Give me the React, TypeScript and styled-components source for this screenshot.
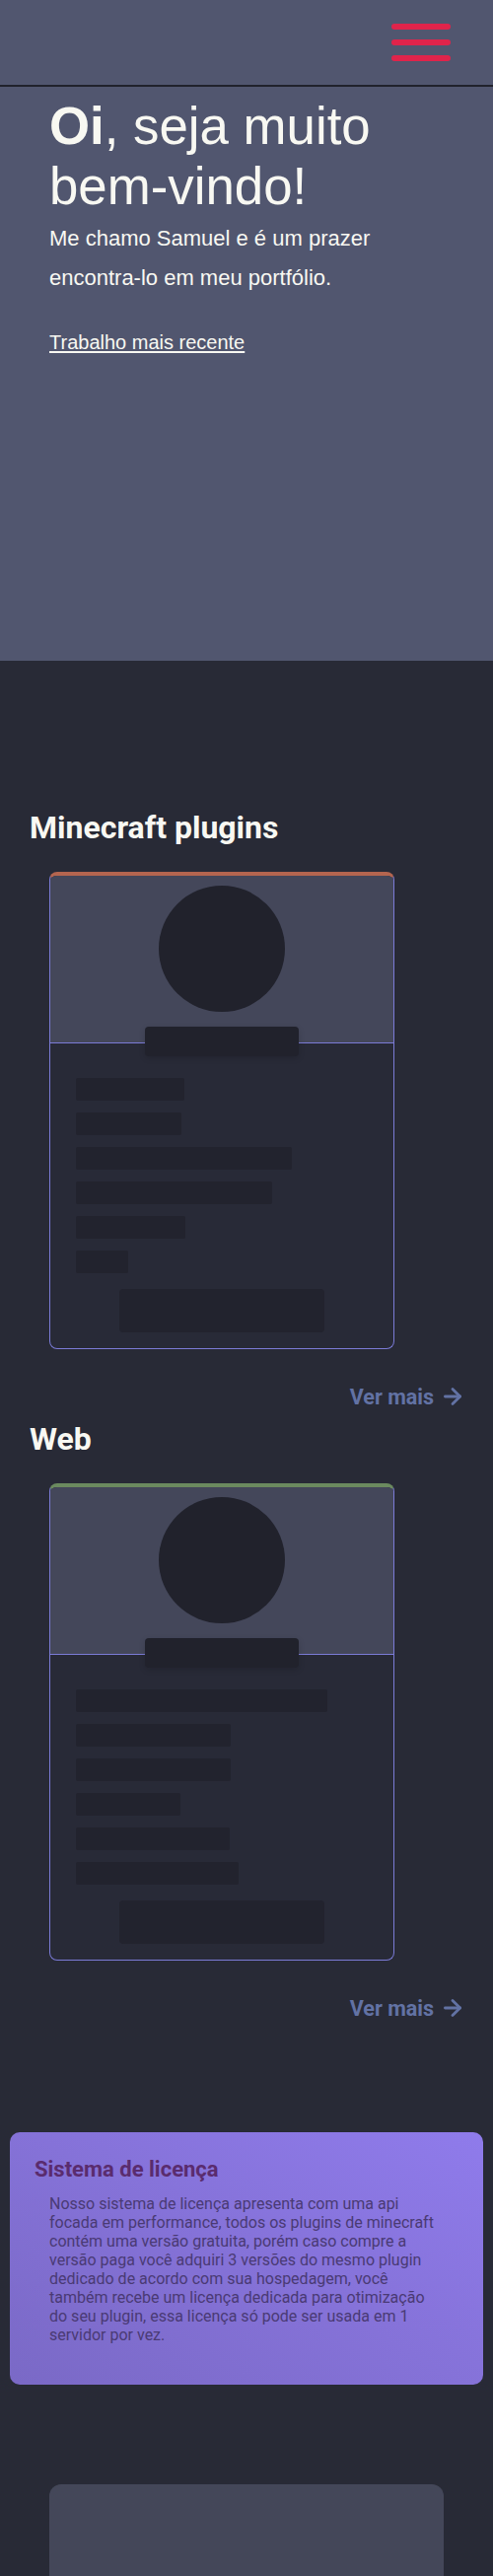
import React from 'react';
import styled, { createGlobalStyle } from 'styled-components';
import { ArrowRight } from 'lucide-react';

const GlobalStyle = createGlobalStyle`
  * { box-sizing: border-box; }
  html, body { margin: 0; padding: 0; background: #282a36; }
  body { font-family: "Liberation Sans", Arial, sans-serif; color: #f8f8f2; }
`;

const Page = styled.div`
  background: #282a36;
  min-height: 2612px;
  overflow: hidden;
`;

const Hero = styled.section`
  background: #51566f;
  height: 670px;
  display: flex;
  flex-direction: column;
`;

const Header = styled.header`
  height: 88px;
  border-bottom: 2px solid #21222c;
  display: flex;
  align-items: center;
  justify-content: flex-end;
  padding-right: 43px;
`;

const MenuButton = styled.button`
  background: none;
  border: 0;
  padding: 0;
  display: flex;
  flex-direction: column;
  gap: 10px;
  cursor: pointer;
`;

const MenuBar = styled.span`
  display: block;
  width: 60px;
  height: 6px;
  border-radius: 3px;
  background: #e0244b;
`;

const HeroContent = styled.div`
  padding: 9px 0 0 50px;
  width: 450px;
  display: flex;
  flex-direction: column;
  align-items: flex-start;
`;

const HeroTitle = styled.h1`
  margin: 0;
  font-size: 52.8px;
  font-weight: 400;
  line-height: 61px;
  color: #f8f8f2;

  strong {
    font-weight: 700;
  }
`;

const HeroText = styled.p`
  margin: 3px 0 0;
  font-size: 22px;
  line-height: 40px;
  color: #f8f8f2;
`;

const HeroLink = styled.a`
  margin-top: 34px;
  font-size: 20px;
  line-height: normal;
  color: #f8f8f2;
  text-decoration: underline;
  text-underline-offset: 2px;
`;

const Projects = styled.section`
  padding-top: 150px;
  display: flex;
  flex-direction: column;
`;

const SectionTitle = styled.h2<{ $gap: number }>`
  margin: ${(p) => p.$gap}px 0 0 30px;
  font-family: Roboto, "Liberation Sans", sans-serif;
  font-weight: 700;
  font-size: 32px;
  line-height: normal;
  color: #f8f8f2;
`;

const Card = styled.article<{ $accent: string }>`
  margin: 26px 0 0 50px;
  width: 350px;
  background: #282a37;
  border: 1px solid #7b7bd6;
  border-top: 4px solid ${(p) => p.$accent};
  border-radius: 8px;
  overflow: hidden;
  display: flex;
  flex-direction: column;
`;

const CardTop = styled.div`
  height: 170px;
  padding-top: 10px;
  background: #44475a;
  border-bottom: 1px solid #7b7bd6;
  display: flex;
  justify-content: center;
`;

const Avatar = styled.div`
  width: 128px;
  height: 128px;
  border-radius: 50%;
  background: #21222c;
`;

const NameBlock = styled.div`
  position: relative;
  width: 156px;
  height: 30px;
  margin: -17px auto 0;
  border-radius: 4px;
  background: #21222c;
  box-shadow: 0 2px 6px rgba(0, 0, 0, 0.15);
`;

const Lines = styled.div`
  padding: 22px 26px 0;
  display: flex;
  flex-direction: column;
  gap: 12px;
`;

const Line = styled.div<{ $w: number }>`
  width: ${(p) => p.$w}px;
  height: 23px;
  border-radius: 2px;
  background: #22232e;
`;

const CardButton = styled.div`
  width: 208px;
  height: 44px;
  margin: 16px auto 16px;
  border-radius: 4px;
  background: #22232e;
`;

const MoreRow = styled.div`
  margin-top: 35px;
  padding-right: 28px;
  display: flex;
  justify-content: flex-end;
`;

const MoreLink = styled.a`
  display: flex;
  align-items: center;
  gap: 6px;
  font-family: Roboto, "Liberation Sans", sans-serif;
  font-weight: 700;
  font-size: 21.5px;
  line-height: normal;
  color: #6272a4;
  text-decoration: none;
`;

const LicenseBox = styled.section`
  margin: 113px 10px 0;
  padding: 25px 25px 41px;
  border-radius: 10px;
  background: linear-gradient(30deg, #7a69c6 0%, #8572d8 50%, #8f7beb 100%);
  font-family: Roboto, "Liberation Sans", sans-serif;
`;

const LicenseTitle = styled.h3`
  margin: 0;
  font-size: 22px;
  font-weight: 700;
  line-height: normal;
  color: #5a2c6e;
`;

const LicenseText = styled.p`
  margin: 13px 15px 0;
  font-size: 16px;
  line-height: 19px;
  color: #4a3a74;
`;

const BottomPanel = styled.div`
  margin: 101px 50px 0;
  height: 220px;
  border-radius: 12px;
  background: #444759;
`;

type Project = { title: string; accent: string; lines: number[] };

const projects: Project[] = [
  { title: 'Minecraft plugins', accent: '#b4654f', lines: [110, 107, 219, 199, 111, 53] },
  { title: 'Web', accent: '#6b8a5f', lines: [255, 157, 157, 106, 156, 165] },
];

export default function App() {
  return (
    <Page>
      <GlobalStyle />
      <Hero>
        <Header>
          <MenuButton aria-label="menu">
            <MenuBar />
            <MenuBar />
            <MenuBar />
          </MenuButton>
        </Header>
        <HeroContent>
          <HeroTitle>
            <strong>Oi</strong>, seja muito bem-vindo!
          </HeroTitle>
          <HeroText>Me chamo Samuel e é um prazer encontra-lo em meu portfólio.</HeroText>
          <HeroLink href="#">Trabalho mais recente</HeroLink>
        </HeroContent>
      </Hero>

      <Projects>
        {projects.map((p, i) => (
          <React.Fragment key={p.title}>
            <SectionTitle $gap={i === 0 ? 0 : 11}>{p.title}</SectionTitle>
            <Card $accent={p.accent}>
              <CardTop>
                <Avatar />
              </CardTop>
              <NameBlock />
              <Lines>
                {p.lines.map((w, j) => (
                  <Line key={j} $w={w} />
                ))}
              </Lines>
              <CardButton />
            </Card>
            <MoreRow>
              <MoreLink href="#">
                Ver mais <ArrowRight size={26} strokeWidth={2.6} />
              </MoreLink>
            </MoreRow>
          </React.Fragment>
        ))}
      </Projects>

      <LicenseBox>
        <LicenseTitle>Sistema de licença</LicenseTitle>
        <LicenseText>
          Nosso sistema de licença apresenta com uma api focada em performance, todos os plugins de
          minecraft contém uma versão gratuita, porém caso compre a versão paga você adquiri 3
          versões do mesmo plugin dedicado de acordo com sua hospedagem, você também recebe um
          licença dedicada para otimização do seu plugin, essa licença só pode ser usada em 1
          servidor por vez.
        </LicenseText>
      </LicenseBox>

      <BottomPanel />
    </Page>
  );
}
